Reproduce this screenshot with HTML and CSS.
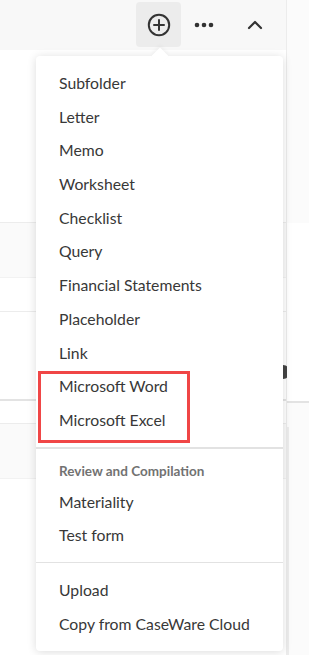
FILE: index.html
```html
<!DOCTYPE html>
<html lang="en">
<head>
  <meta name="viewport" content="width=device-width, initial-scale=1.0" />
  <title>Folder actions</title>
  <link rel="stylesheet" href="styles.css">
</head>
<body>

  <div class="page">
    <div class="main">
      <div class="toolbar">
        <button class="tool active" aria-label="New">
          <svg width="24" height="24" viewBox="0 0 24 24">
            <circle cx="12" cy="12" r="10.2" fill="none" stroke="#333" stroke-width="2"/>
            <path d="M12 7v10M7 12h10" stroke="#333" stroke-width="2" stroke-linecap="round"/>
          </svg>
        </button>
        <button class="tool" aria-label="More">
          <svg width="20" height="8" viewBox="0 0 20 8">
            <circle cx="3" cy="4" r="2.3" fill="#333"/>
            <circle cx="10" cy="4" r="2.3" fill="#333"/>
            <circle cx="17" cy="4" r="2.3" fill="#333"/>
          </svg>
        </button>
        <button class="tool chevron" aria-label="Collapse">
          <svg width="16" height="10" viewBox="0 0 16 10">
            <path d="M2 8l6-6 6 6" fill="none" stroke="#333" stroke-width="2.2" stroke-linecap="round" stroke-linejoin="round"/>
          </svg>
        </button>
      </div>

      <div class="row tall"></div>
      <div class="card"></div>
      <div class="row short"></div>
      <div class="row icon-row"><span class="status-dot"></span></div>
      <div class="row thin"></div>
      <div class="card"></div>
    </div>
    <div class="gutter">
      <div class="gutter-top"></div>
      <div class="gutter-mid"></div>
      <div class="gutter-low"></div>
    </div>
  </div>

  <div class="dropdown">
    <span class="arrow"></span>
    <ul class="menu">
      <li>Subfolder</li>
      <li>Letter</li>
      <li>Memo</li>
      <li>Worksheet</li>
      <li>Checklist</li>
      <li>Query</li>
      <li>Financial Statements</li>
      <li>Placeholder</li>
      <li>Link</li>
      <li>Microsoft Word</li>
      <li>Microsoft Excel</li>
    </ul>
    <div class="divider thick"></div>
    <div class="group-title">Review and Compilation</div>
    <ul class="menu">
      <li>Materiality</li>
      <li>Test form</li>
    </ul>
    <div class="divider"></div>
    <ul class="menu">
      <li>Upload</li>
      <li>Copy from CaseWare Cloud</li>
    </ul>
    <div class="highlight"></div>
  </div>

</body>
</html>
```

FILE: styles.css
```css
body {
  margin: 0;
  width: 309px;
  height: 655px;
  overflow: hidden;
  background: #fff;
  font-family: Lato, "Open Sans", sans-serif;
  color: #333;
  position: relative;
}

.page {
  display: flex;
  height: 655px;
}

.main {
  width: 286px;
  border-right: 1px solid #ececec;
}

.gutter {
  flex: 1;
  background: #fbfbfb;
}

.toolbar {
  height: 50px;
  background: #f8f8f8;
  display: flex;
  justify-content: flex-end;
  align-items: flex-start;
  padding-right: 9px;
}

.tool {
  width: 45px;
  height: 45px;
  margin-top: 2px;
  border: none;
  background: transparent;
  border-radius: 4px;
  display: flex;
  align-items: center;
  justify-content: center;
  padding: 0;
}

.tool.active {
  background: #ececec;
}

.tool.chevron {
  margin-left: 6px;
}

.row {
  border-bottom: 1px solid #ececec;
}

.row.tall {
  height: 172px;
}

.row.short {
  height: 33px;
}

.row.icon-row {
  height: 87px;
  border-bottom: 2px solid #e3e3e3;
  display: flex;
  justify-content: flex-end;
  align-items: flex-end;
}

.status-dot {
  width: 14px;
  height: 14px;
  border-radius: 50%;
  background: #444;
  margin: 0 -4px 20px 0;
}

.row.thin {
  height: 22px;
}

.card {
  height: 54px;
  background: #fafafa;
  border-bottom: 1px solid #f2f2f2;
}

.gutter-top {
  height: 223px;
}

.gutter-mid {
  height: 178px;
  background: #fff;
  border-bottom: 2px solid #e3e3e3;
}

.gutter-low {
  height: 250px;
  border-left: 2px solid #ececec;
  margin-top: 24px;
}

.dropdown {
  position: absolute;
  left: 36px;
  top: 56px;
  width: 247px;
  background: #fff;
  border-radius: 4px;
  box-shadow: 0 1px 10px rgba(0, 0, 0, 0.14);
  padding: 10px 0 11px;
}

.arrow {
  position: absolute;
  left: 118px;
  top: -6px;
  width: 12px;
  height: 12px;
  background: #fff;
  transform: rotate(45deg);
  box-shadow: -2px -2px 4px rgba(0, 0, 0, 0.04);
}

.menu {
  list-style: none;
  margin: 0;
  padding: 0;
  position: relative;
}

.menu li {
  height: 33.7px;
  line-height: 33.7px;
  padding-left: 23px;
  font-size: 15.75px;
  color: #383838;
}

.divider {
  height: 1px;
  background: #e2e2e2;
  margin: 10px 0;
}

.divider.thick {
  height: 2px;
  margin-bottom: 0;
}

.group-title {
  padding: 12px 0 4px 23px;
  line-height: 20px;
  font-size: 13.5px;
  font-weight: bold;
  color: #727272;
}

.highlight {
  position: absolute;
  left: 2px;
  top: 315px;
  width: 146px;
  height: 66px;
  border: 3px solid #f04646;
}
```
